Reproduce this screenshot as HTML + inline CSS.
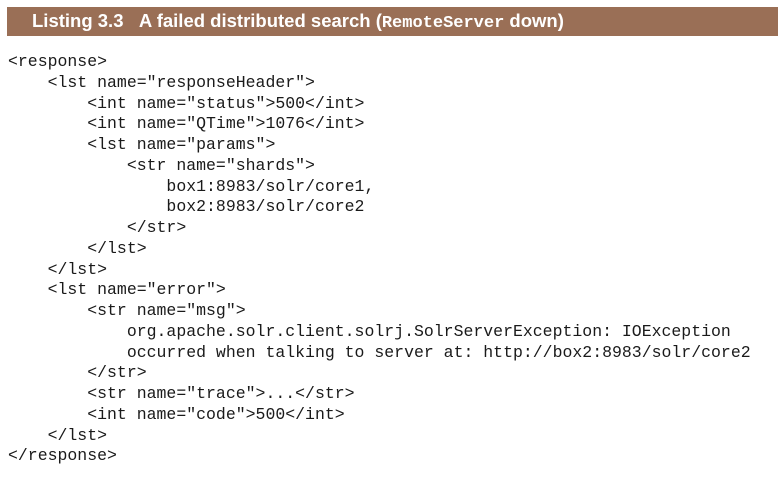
<!DOCTYPE html>
<html><head><style>
body{margin:0;background:#fff;width:784px;height:479px;overflow:hidden;position:relative}
.bar{position:absolute;left:7px;top:7px;width:771px;height:29px;background:#9a6f56}
.t{position:absolute;left:32px;top:10px;color:#fff;font:bold 18.5px "Liberation Sans",sans-serif;white-space:nowrap}
.t code{font:bold 17px "Liberation Mono",monospace}
pre{position:absolute;left:8px;top:52px;margin:0;font:16.5px/20.75px "Liberation Mono",monospace;color:#1a1a1a}
</style></head><body>
<div class="bar"></div>
<div class="t">Listing 3.3&nbsp;&nbsp;&nbsp;A failed distributed search (<code>RemoteServer</code> down)</div>
<pre>&lt;response&gt;
    &lt;lst name="responseHeader"&gt;
        &lt;int name="status"&gt;500&lt;/int&gt;
        &lt;int name="QTime"&gt;1076&lt;/int&gt;
        &lt;lst name="params"&gt;
            &lt;str name="shards"&gt;
                box1:8983/solr/core1,
                box2:8983/solr/core2
            &lt;/str&gt;
        &lt;/lst&gt;
    &lt;/lst&gt;
    &lt;lst name="error"&gt;
        &lt;str name="msg"&gt;
            org.apache.solr.client.solrj.SolrServerException: IOException
            occurred when talking to server at: http://box2:8983/solr/core2
        &lt;/str&gt;
        &lt;str name="trace"&gt;...&lt;/str&gt;
        &lt;int name="code"&gt;500&lt;/int&gt;
    &lt;/lst&gt;
&lt;/response&gt;</pre>
</body></html>
